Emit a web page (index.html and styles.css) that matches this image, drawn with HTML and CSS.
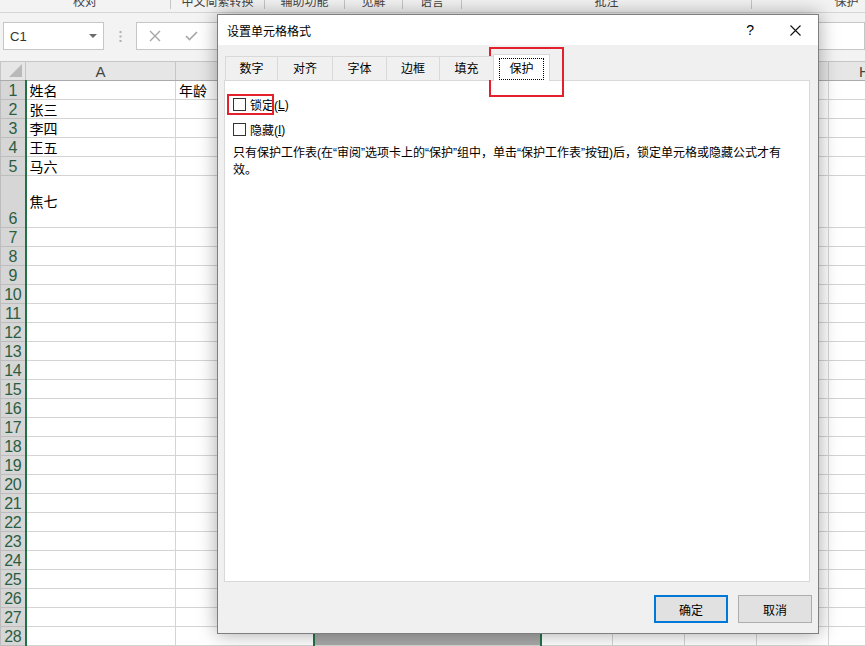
FILE: index.html
```html
<!DOCTYPE html>
<html lang="zh-CN">
<head>
    <meta charset="UTF-8">
    <title>设置单元格格式</title>
    <link rel="stylesheet" href="styles.css">
</head>
<body>
    <div class="app">
        <div class="groups">
            <div class="group" style="width:171px"><span>校对</span></div>
            <div class="group" style="width:94px"><span>中文简繁转换</span></div>
            <div class="group" style="width:80px"><span>辅助功能</span></div>
            <div class="group" style="width:58px"><span>见解</span></div>
            <div class="group" style="width:59px"><span>语言</span></div>
            <div class="group" style="width:290px"><span>批注</span></div>
            <div class="group" style="width:190px"><span>保护</span></div>
        </div>

        <div class="formula-bar">
            <div class="namebox">
                <span>C1</span>
                <svg class="namebox-arrow" width="8" height="5" viewBox="0 0 8 5"><polygon points="0,0 8,0 4,4" fill="#6a6a6a"/></svg>
            </div>
            <svg class="grip" width="3" height="11" viewBox="0 0 3 11">
                <rect x="0.5" y="0" width="2" height="2" fill="#b0b0b0"/>
                <rect x="0.5" y="4.5" width="2" height="2" fill="#b0b0b0"/>
                <rect x="0.5" y="9" width="2" height="2" fill="#b0b0b0"/>
            </svg>
            <div class="formula-input">
                <svg class="fx-cancel" width="12" height="12" viewBox="0 0 12 12"><path d="M1 1 L11 11 M11 1 L1 11" stroke="#a6a6a6" stroke-width="1.4" fill="none"/></svg>
                <svg class="fx-enter" width="13" height="10" viewBox="0 0 13 10"><path d="M1 5 L4.5 8.5 L12 1" stroke="#a6a6a6" stroke-width="1.6" fill="none"/></svg>
            </div>
        </div>

        <table class="sheet">
            <colgroup>
                <col style="width:25px">
                <col style="width:150px">
                <col style="width:138px">
                <col style="width:227px">
                <col style="width:72px">
                <col style="width:72px">
                <col style="width:72px">
                <col style="width:72px">
                <col style="width:72px">
            </colgroup>
            <tr class="hd">
                <th class="corner"><svg width="14" height="14" viewBox="0 0 14 14"><polygon points="13,0 13,13 0,13" fill="#b9b9b9"/></svg></th>
                <th>A</th><th>B</th><th class="sel">C</th><th>D</th><th>E</th><th>F</th><th>G</th><th>H</th>
            </tr>
            <tr><th class="rh">1</th><td>姓名</td><td>年龄</td><td class="c"></td><td></td><td></td><td></td><td></td><td></td></tr>
            <tr><th class="rh">2</th><td>张三</td><td></td><td class="c"></td><td></td><td></td><td></td><td></td><td></td></tr>
            <tr><th class="rh">3</th><td>李四</td><td></td><td class="c"></td><td></td><td></td><td></td><td></td><td></td></tr>
            <tr><th class="rh">4</th><td>王五</td><td></td><td class="c"></td><td></td><td></td><td></td><td></td><td></td></tr>
            <tr><th class="rh">5</th><td>马六</td><td></td><td class="c"></td><td></td><td></td><td></td><td></td><td></td></tr>
            <tr class="tall"><th class="rh">6</th><td class="mid">焦七</td><td></td><td class="c"></td><td></td><td></td><td></td><td></td><td></td></tr>
            <tr><th class="rh">7</th><td></td><td></td><td class="c"></td><td></td><td></td><td></td><td></td><td></td></tr>
            <tr><th class="rh">8</th><td></td><td></td><td class="c"></td><td></td><td></td><td></td><td></td><td></td></tr>
            <tr><th class="rh">9</th><td></td><td></td><td class="c"></td><td></td><td></td><td></td><td></td><td></td></tr>
            <tr><th class="rh">10</th><td></td><td></td><td class="c"></td><td></td><td></td><td></td><td></td><td></td></tr>
            <tr><th class="rh">11</th><td></td><td></td><td class="c"></td><td></td><td></td><td></td><td></td><td></td></tr>
            <tr><th class="rh">12</th><td></td><td></td><td class="c"></td><td></td><td></td><td></td><td></td><td></td></tr>
            <tr><th class="rh">13</th><td></td><td></td><td class="c"></td><td></td><td></td><td></td><td></td><td></td></tr>
            <tr><th class="rh">14</th><td></td><td></td><td class="c"></td><td></td><td></td><td></td><td></td><td></td></tr>
            <tr><th class="rh">15</th><td></td><td></td><td class="c"></td><td></td><td></td><td></td><td></td><td></td></tr>
            <tr><th class="rh">16</th><td></td><td></td><td class="c"></td><td></td><td></td><td></td><td></td><td></td></tr>
            <tr><th class="rh">17</th><td></td><td></td><td class="c"></td><td></td><td></td><td></td><td></td><td></td></tr>
            <tr><th class="rh">18</th><td></td><td></td><td class="c"></td><td></td><td></td><td></td><td></td><td></td></tr>
            <tr><th class="rh">19</th><td></td><td></td><td class="c"></td><td></td><td></td><td></td><td></td><td></td></tr>
            <tr><th class="rh">20</th><td></td><td></td><td class="c"></td><td></td><td></td><td></td><td></td><td></td></tr>
            <tr><th class="rh">21</th><td></td><td></td><td class="c"></td><td></td><td></td><td></td><td></td><td></td></tr>
            <tr><th class="rh">22</th><td></td><td></td><td class="c"></td><td></td><td></td><td></td><td></td><td></td></tr>
            <tr><th class="rh">23</th><td></td><td></td><td class="c"></td><td></td><td></td><td></td><td></td><td></td></tr>
            <tr><th class="rh">24</th><td></td><td></td><td class="c"></td><td></td><td></td><td></td><td></td><td></td></tr>
            <tr><th class="rh">25</th><td></td><td></td><td class="c"></td><td></td><td></td><td></td><td></td><td></td></tr>
            <tr><th class="rh">26</th><td></td><td></td><td class="c"></td><td></td><td></td><td></td><td></td><td></td></tr>
            <tr><th class="rh">27</th><td></td><td></td><td class="c"></td><td></td><td></td><td></td><td></td><td></td></tr>
            <tr><th class="rh">28</th><td></td><td></td><td class="c"></td><td></td><td></td><td></td><td></td><td></td></tr>
        </table>

        <div class="dialog">
            <div class="dlg-title">
                <span class="dlg-name">设置单元格格式</span>
                <span class="dlg-help">?</span>
                <svg class="dlg-close" width="11" height="11" viewBox="0 0 11 11"><path d="M0.5 0.5 L10.5 10.5 M10.5 0.5 L0.5 10.5" stroke="#111" stroke-width="1.1" fill="none"/></svg>
            </div>
            <div class="dlg-body">
                <div class="tabs">
                    <div class="tab" style="width:53px">数字</div>
                    <div class="tab" style="width:56px">对齐</div>
                    <div class="tab" style="width:55px">字体</div>
                    <div class="tab" style="width:54px">边框</div>
                    <div class="tab" style="width:55px">填充</div>
                    <div class="tab tab-active" style="width:57px"><span class="focus">保护</span></div>
                </div>
                <div class="panel">
                    <label class="check"><span class="box"></span>锁定(<u>L</u>)</label>
                    <label class="check"><span class="box"></span>隐藏(<u>I</u>)</label>
                    <p class="note">只有保护工作表(在“审阅”选项卡上的“保护”组中，单击“保护工作表”按钮)后，锁定单元格或隐藏公式才有<br>效。</p>
                </div>
                <div class="dlg-buttons">
                    <button class="btn btn-default">确定</button>
                    <button class="btn">取消</button>
                </div>
            </div>
            <div class="mark mark-tab"></div>
            <div class="mark mark-lock"></div>
        </div>
    </div>
</body>
</html>
```

FILE: styles.css
```css
body {
    margin: 0;
    background-color: #fff;
    font-family: "Liberation Sans", "Noto Sans CJK SC", sans-serif;
}
.app {
    position: relative;
    width: 865px;
    height: 646px;
    overflow: hidden;
}

/* ribbon group labels, cut off at the top */
.groups {
    display: flex;
    height: 13px;
    background-color: #f3f3f3;
    border-bottom: 1px solid #d6d6d6;
    box-sizing: border-box;
    overflow: hidden;
}
.group {
    flex: none;
    box-sizing: border-box;
    height: 9px;
    border-right: 1px solid #c6c6c6;
    text-align: center;
    font-size: 12px;
    line-height: 12px;
    color: #444;
}
.group span {
    display: block;
    margin-top: -4px;
    white-space: nowrap;
}

/* name box + formula bar */
.formula-bar {
    display: flex;
    align-items: center;
    height: 48px;
    padding-bottom: 2px;
    box-sizing: border-box;
    background-color: #f3f3f3;
}
.namebox {
    display: flex;
    align-items: center;
    justify-content: space-between;
    margin-left: 3px;
    width: 101px;
    height: 28px;
    padding: 0 6px 0 6px;
    box-sizing: border-box;
    background-color: #fff;
    border: 1px solid #c6c6c6;
    font-size: 13px;
    color: #333;
}
.grip {
    margin-left: 15px;
    margin-right: 14px;
}
.formula-input {
    flex: 1;
    display: flex;
    align-items: center;
    height: 28px;
    box-sizing: border-box;
    background-color: #fff;
    border: 1px solid #c6c6c6;
}
.fx-cancel {
    margin-left: 12px;
}
.fx-enter {
    margin-left: 24px;
}

/* grid */
.sheet {
    border-collapse: collapse;
    table-layout: fixed;
    width: 900px;
}
.sheet tr {
    height: 19px;
}
.sheet tr.tall {
    height: 52px;
}
.sheet th,
.sheet td {
    padding: 0;
    overflow: hidden;
    white-space: nowrap;
}
.sheet td {
    border: 1px solid #d4d4d4;
    padding-left: 3px;
    font-family: "Noto Sans CJK SC", sans-serif;
    font-size: 14px;
    line-height: 17px;
    vertical-align: bottom;
    color: #000;
}
.sheet td.mid {
    vertical-align: middle;
}
.sheet td.c {
    background-color: #a9a9a9;
    border-left: 2px solid #217346;
    border-right: 2px solid #217346;
}
.hd th {
    background-color: #e6e6e6;
    border: 1px solid #c6c6c6;
    border-bottom-color: #ababab;
    font-family: "Liberation Sans", sans-serif;
    font-weight: normal;
    font-size: 15px;
    color: #444;
    line-height: 17px;
}
.hd th.sel {
    background-color: #d2d2d2;
    color: #217346;
    border-bottom: 2px solid #217346;
}
.hd th.corner {
    text-align: right;
    vertical-align: bottom;
    line-height: 0;
}
.corner svg {
    margin: 0 2px 2px 0;
}
.sheet th.rh {
    background-color: #d6d6d6;
    border: 1px solid #bdbdbd;
    border-right: 2px solid #217346;
    font-family: "Liberation Sans", sans-serif;
    font-weight: normal;
    font-size: 16px;
    letter-spacing: -0.5px;
    line-height: 17px;
    color: #2a5d42;
    text-align: center;
    vertical-align: bottom;
}

/* dialog */
.dialog {
    position: absolute;
    left: 217px;
    top: 14px;
    width: 602px;
    height: 620px;
    box-sizing: border-box;
    border: 1px solid #7f7f7f;
    background-color: #f0f0f0;
    box-shadow: 0 0 18px rgba(0, 0, 0, 0.35);
    font-size: 12px;
    color: #000;
}
.dlg-title {
    display: flex;
    align-items: center;
    height: 30px;
    padding-left: 9px;
    background-color: #fff;
}
.dlg-name {
    flex: 1;
}
.dlg-help {
    font-size: 14px;
    margin-right: 36px;
}
.dlg-close {
    margin-right: 17px;
}
.tabs {
    position: relative;
    z-index: 1;
    display: flex;
    align-items: flex-start;
    height: 27px;
    margin-top: 9px;
    margin-bottom: -1px;
    padding-left: 7px;
}
.tab {
    box-sizing: border-box;
    height: 24px;
    margin-top: 2px;
    margin-right: -1px;
    padding-top: 2px;
    border: 1px solid #d9d9d9;
    border-bottom: none;
    background-color: #f0f0f0;
    text-align: center;
    line-height: 20px;
}
.tab-active {
    height: 27px;
    margin-top: 0;
    background-color: #fff;
    padding-top: 3px;
}
.focus {
    display: inline-block;
    width: 45px;
    height: 22px;
    box-sizing: border-box;
    border: 1px dotted #000;
    line-height: 20px;
    vertical-align: top;
}
.panel {
    height: 502px;
    margin: 0 8px 0 6px;
    padding: 14px 8px;
    box-sizing: border-box;
    background-color: #fff;
    border: 1px solid #d9d9d9;
}
.check {
    display: flex;
    align-items: center;
    height: 19px;
    margin-bottom: 6px;
}
.box {
    width: 13px;
    height: 13px;
    box-sizing: border-box;
    border: 1px solid #333;
    background-color: #fff;
    margin-right: 4px;
}
.note {
    margin: 0;
    width: 580px;
    line-height: 17px;
}
.dlg-buttons {
    display: flex;
    justify-content: flex-end;
    gap: 10px;
    margin-top: 13px;
    padding-right: 6px;
}
.btn {
    width: 74px;
    height: 28px;
    box-sizing: border-box;
    border: 1px solid #adadad;
    background-color: #e1e1e1;
    font-family: "Liberation Sans", "Noto Sans CJK SC", sans-serif;
    font-size: 12px;
    color: #000;
    padding: 0;
}
.btn-default {
    border: 2px solid #0078d7;
}

/* red annotation boxes */
.mark {
    position: absolute;
    box-sizing: border-box;
    border: 2px solid #e3202b;
}
.mark-tab {
    left: 271px;
    top: 32px;
    width: 75px;
    height: 50px;
}
.mark-lock {
    left: 9px;
    top: 79px;
    width: 47px;
    height: 21px;
}
```
